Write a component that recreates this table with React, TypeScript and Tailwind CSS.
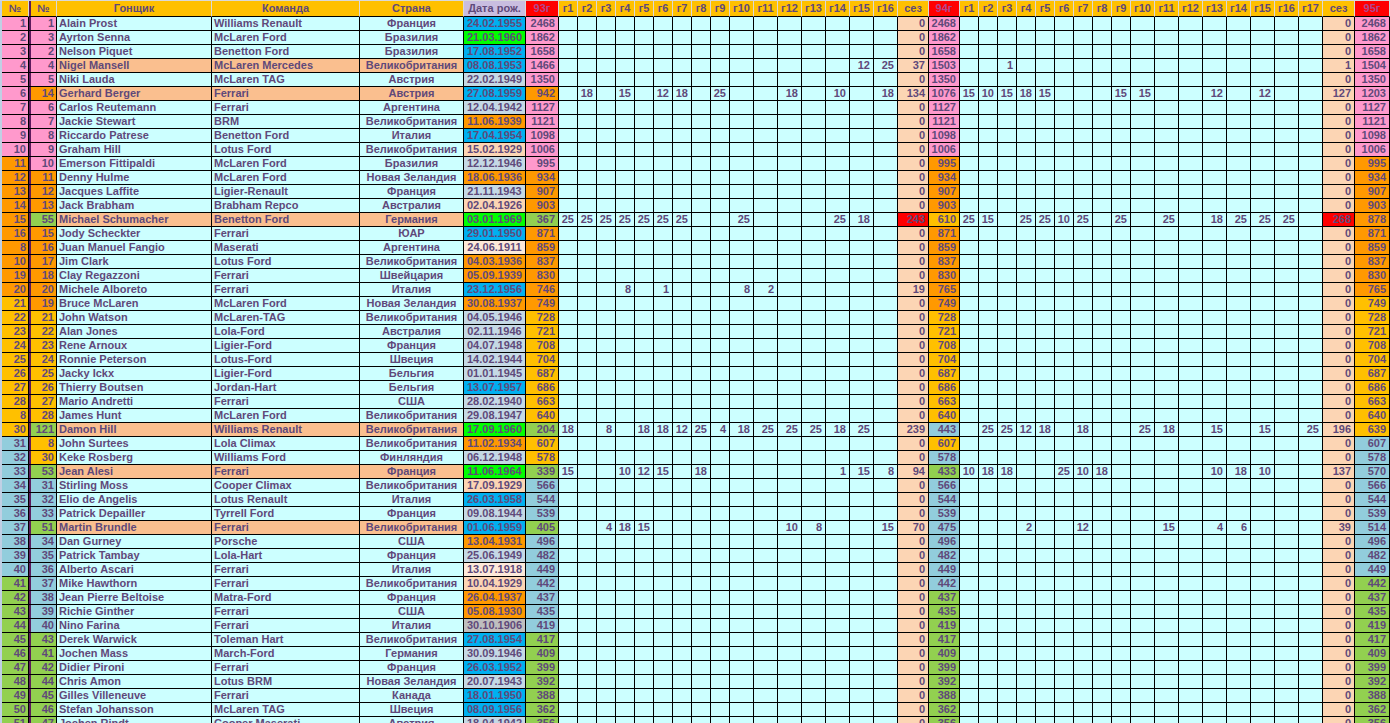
import React from 'react';

type Drv = [number, number, string, string, string, string, number, boolean?];

const DRIVERS: Drv[] = [
  [1, 1, 'Alain Prost', 'Williams Renault', 'Франция', '24.02.1955', 2468],
  [2, 3, 'Ayrton Senna', 'McLaren Ford', 'Бразилия', '21.03.1960', 1862],
  [3, 2, 'Nelson Piquet', 'Benetton Ford', 'Бразилия', '17.08.1952', 1658],
  [4, 4, 'Nigel Mansell', 'McLaren Mercedes', 'Великобритания', '08.08.1953', 1466, true],
  [5, 5, 'Niki Lauda', 'McLaren TAG', 'Австрия', '22.02.1949', 1350],
  [6, 14, 'Gerhard Berger', 'Ferrari', 'Австрия', '27.08.1959', 942, true],
  [7, 6, 'Carlos Reutemann', 'Ferrari', 'Аргентина', '12.04.1942', 1127],
  [8, 7, 'Jackie Stewart', 'BRM', 'Великобритания', '11.06.1939', 1121],
  [9, 8, 'Riccardo Patrese', 'Benetton Ford', 'Италия', '17.04.1954', 1098],
  [10, 9, 'Graham Hill', 'Lotus Ford', 'Великобритания', '15.02.1929', 1006],
  [11, 10, 'Emerson Fittipaldi', 'McLaren Ford', 'Бразилия', '12.12.1946', 995],
  [12, 11, 'Denny Hulme', 'McLaren Ford', 'Новая Зеландия', '18.06.1936', 934],
  [13, 12, 'Jacques Laffite', 'Ligier-Renault', 'Франция', '21.11.1943', 907],
  [14, 13, 'Jack Brabham', 'Brabham Repco', 'Австралия', '02.04.1926', 903],
  [15, 55, 'Michael Schumacher', 'Benetton Ford', 'Германия', '03.01.1969', 367, true],
  [16, 15, 'Jody Scheckter', 'Ferrari', 'ЮАР', '29.01.1950', 871],
  [8, 16, 'Juan Manuel Fangio', 'Maserati', 'Аргентина', '24.06.1911', 859],
  [10, 17, 'Jim Clark', 'Lotus Ford', 'Великобритания', '04.03.1936', 837],
  [19, 18, 'Clay Regazzoni', 'Ferrari', 'Швейцария', '05.09.1939', 830],
  [20, 20, 'Michele Alboreto', 'Ferrari', 'Италия', '23.12.1956', 746],
  [21, 19, 'Bruce McLaren', 'McLaren Ford', 'Новая Зеландия', '30.08.1937', 749],
  [22, 21, 'John Watson', 'McLaren-TAG', 'Великобритания', '04.05.1946', 728],
  [23, 22, 'Alan Jones', 'Lola-Ford', 'Австралия', '02.11.1946', 721],
  [24, 23, 'Rene Arnoux', 'Ligier-Ford', 'Франция', '04.07.1948', 708],
  [25, 24, 'Ronnie Peterson', 'Lotus-Ford', 'Швеция', '14.02.1944', 704],
  [26, 25, 'Jacky Ickx', 'Ligier-Ford', 'Бельгия', '01.01.1945', 687],
  [27, 26, 'Thierry Boutsen', 'Jordan-Hart', 'Бельгия', '13.07.1957', 686],
  [28, 27, 'Mario Andretti', 'Ferrari', 'США', '28.02.1940', 663],
  [8, 28, 'James Hunt', 'McLaren Ford', 'Великобритания', '29.08.1947', 640],
  [30, 121, 'Damon Hill', 'Williams Renault', 'Великобритания', '17.09.1960', 204, true],
  [31, 8, 'John Surtees', 'Lola Climax', 'Великобритания', '11.02.1934', 607],
  [32, 30, 'Keke Rosberg', 'Williams Ford', 'Финляндия', '06.12.1948', 578],
  [33, 53, 'Jean Alesi', 'Ferrari', 'Франция', '11.06.1964', 339, true],
  [34, 31, 'Stirling Moss', 'Cooper Climax', 'Великобритания', '17.09.1929', 566],
  [35, 32, 'Elio de Angelis', 'Lotus Renault', 'Италия', '26.03.1958', 544],
  [36, 33, 'Patrick Depailler', 'Tyrrell Ford', 'Франция', '09.08.1944', 539],
  [37, 51, 'Martin Brundle', 'Ferrari', 'Великобритания', '01.06.1959', 405, true],
  [38, 34, 'Dan Gurney', 'Porsche', 'США', '13.04.1931', 496],
  [39, 35, 'Patrick Tambay', 'Lola-Hart', 'Франция', '25.06.1949', 482],
  [40, 36, 'Alberto Ascari', 'Ferrari', 'Италия', '13.07.1918', 449],
  [41, 37, 'Mike Hawthorn', 'Ferrari', 'Великобритания', '10.04.1929', 442],
  [42, 38, 'Jean Pierre Beltoise', 'Matra-Ford', 'Франция', '26.04.1937', 437],
  [43, 39, 'Richie Ginther', 'Ferrari', 'США', '05.08.1930', 435],
  [44, 40, 'Nino Farina', 'Ferrari', 'Италия', '30.10.1906', 419],
  [45, 43, 'Derek Warwick', 'Toleman Hart', 'Великобритания', '27.08.1954', 417],
  [46, 41, 'Jochen Mass', 'March-Ford', 'Германия', '30.09.1946', 409],
  [47, 42, 'Didier Pironi', 'Ferrari', 'Франция', '26.03.1952', 399],
  [48, 44, 'Chris Amon', 'Lotus BRM', 'Новая Зеландия', '20.07.1943', 392],
  [49, 45, 'Gilles Villeneuve', 'Ferrari', 'Канада', '18.01.1950', 388],
  [50, 46, 'Stefan Johansson', 'McLaren TAG', 'Швеция', '08.09.1956', 362],
  [51, 47, 'Jochen Rindt', 'Cooper Maserati', 'Австрия', '18.04.1942', 356],
];

const R93: Record<number, Record<number, number>> = {
  4: { 15: 12, 16: 25 },
  6: { 2: 18, 4: 15, 6: 12, 7: 18, 9: 25, 12: 18, 14: 10, 16: 18 },
  15: { 1: 25, 2: 25, 3: 25, 4: 25, 5: 25, 6: 25, 7: 25, 10: 25, 14: 25, 15: 18 },
  20: { 4: 8, 6: 1, 10: 8, 11: 2 },
  30: { 1: 18, 3: 8, 5: 18, 6: 18, 7: 12, 8: 25, 9: 4, 10: 18, 11: 25, 12: 25, 13: 25, 14: 18, 15: 25 },
  33: { 1: 15, 4: 10, 5: 12, 6: 15, 8: 18, 14: 1, 15: 15, 16: 8 },
  37: { 3: 4, 4: 18, 5: 15, 12: 10, 13: 8, 16: 15 },
};

const R94: Record<number, Record<number, number>> = {
  4: { 3: 1 },
  6: { 1: 15, 2: 10, 3: 15, 4: 18, 5: 15, 9: 15, 10: 15, 13: 12, 15: 12 },
  15: { 1: 25, 2: 15, 4: 25, 5: 25, 6: 10, 7: 25, 9: 25, 11: 25, 13: 18, 14: 25, 15: 25, 16: 25 },
  30: { 2: 25, 3: 25, 4: 12, 5: 18, 7: 18, 10: 25, 11: 18, 13: 15, 15: 15, 17: 25 },
  33: { 1: 10, 2: 18, 3: 18, 6: 25, 7: 10, 8: 18, 13: 10, 14: 18, 15: 10 },
  37: { 4: 2, 7: 12, 11: 15, 13: 4, 14: 6 },
};

const RED_SEASON = new Set([15]);

const GROUP = ['bg-[#ff99cc]', 'bg-[#ff9900]', 'bg-[#ffc000]', 'bg-[#92cddc]', 'bg-[#92d050]'];

const COLS =
  'grid grid-cols-[2px_27px_2px_26px_155px_148px_104px_62px_33px_repeat(9,19px)_repeat(7,24px)_31px_31px_repeat(9,19px)_repeat(8,24px)_32px_35px]';

function dateBg(d: string): string {
  const y = parseInt(d.slice(6), 10);
  if (y >= 1960) return 'bg-[#00ff00]';
  if (y >= 1950) return 'bg-[#00b0f0]';
  if (y >= 1940) return 'bg-[#c5d9e5]';
  if (y >= 1930) return 'bg-[#ff9900]';
  if (y >= 1920) return 'bg-[#fcd5b4]';
  if (y >= 1910) return 'bg-[#fde9d9]';
  return 'bg-[#bfbfbf]';
}

function sum(m?: Record<number, number>) {
  if (!m) return 0;
  return Object.values(m).reduce((a, b) => a + b, 0);
}

const rows = DRIVERS.map((d, i) => {
  const idx = i + 1;
  const s93 = sum(R93[idx]);
  const v94 = d[6] + s93;
  const s94 = sum(R94[idx]);
  const v95 = v94 + s94;
  return { d, idx, s93, v94, s94, v95 };
});

function groupOf(values: number[], v: number, rowIdx: number) {
  if (rowIdx > 50) return GROUP[4];
  const sorted = [...values].sort((a, b) => b - a);
  const r = sorted.indexOf(v);
  return GROUP[Math.min(4, Math.floor(r / 10))];
}

const first50 = rows.slice(0, 50);
const vals93 = first50.map((r) => r.d[6]);
const vals94 = first50.map((r) => r.v94);
const vals95 = first50.map((r) => r.v95);

const cell = 'border-r border-b border-black flex items-center overflow-hidden whitespace-nowrap';
const hcell = 'border-r border-b border-r-[#d9d9d9] border-b-black flex items-center justify-center overflow-hidden whitespace-nowrap';

const R93_COLS = Array.from({ length: 16 }, (_, i) => i + 1);
const R94_COLS = Array.from({ length: 17 }, (_, i) => i + 1);

function Header() {
  return (
    <div className={`${COLS} h-[17px] border-t border-t-[#d9d9d9]`}>
      <div className="bg-[#c0d0e4]" />
      <div className={`${hcell} bg-[#ffc000]`}>№</div>
      <div className="bg-[#5c1a5c] border-b border-black" />
      <div className={`${hcell} bg-[#ffc000]`}>№</div>
      <div className={`${hcell} bg-[#ffc000]`}>Гонщик</div>
      <div className={`${hcell} bg-[#ffc000]`}>Команда</div>
      <div className={`${hcell} bg-[#ffc000]`}>Страна</div>
      <div className={`${hcell} bg-[#c9bde0]`}>Дата рож.</div>
      <div className={`${hcell} bg-[#ff0000] text-[#b0488e]`}>93г</div>
      {R93_COLS.map((n) => (
        <div key={`h93-${n}`} className={`${hcell} bg-[#ffc000]`}>
          г{n}
        </div>
      ))}
      <div className={`${hcell} bg-[#ffc000]`}>сез</div>
      <div className={`${hcell} bg-[#ff0000] text-[#b0488e]`}>94г</div>
      {R94_COLS.map((n) => (
        <div key={`h94-${n}`} className={`${hcell} bg-[#ffc000]`}>
          г{n}
        </div>
      ))}
      <div className={`${hcell} bg-[#ffc000]`}>сез</div>
      <div className={`${hcell} bg-[#ff0000] text-[#b0488e]`}>95г</div>
    </div>
  );
}

function Row({ r }: { r: (typeof rows)[number] }) {
  const [c0, c1, name, team, country, date, v93, hl] = r.d;
  const g0 = GROUP[Math.min(4, Math.floor((r.idx - 1) / 10))];
  const g93 = groupOf(vals93, v93, r.idx);
  const g94 = groupOf(vals94, r.v94, r.idx);
  const g95 = groupOf(vals95, r.v95, r.idx);
  const txtBg = hl ? 'bg-[#fabf8f]' : 'bg-[#ccffff]';
  const red = RED_SEASON.has(r.idx);
  const m93 = R93[r.idx] || {};
  const m94 = R94[r.idx] || {};
  return (
    <div className={`${COLS} h-[14px]`}>
      <div className="bg-[#c0d0e4]" />
      <div className={`${cell} ${g0} justify-end pr-[2px]`}>{c0}</div>
      <div className="bg-[#5c1a5c] border-b border-black" />
      <div className={`${cell} ${g93} justify-end pr-[2px]`}>{c1}</div>
      <div className={`${cell} ${txtBg} pl-[2px]`}>{name}</div>
      <div className={`${cell} ${txtBg} pl-[2px]`}>{team}</div>
      <div className={`${cell} ${txtBg} justify-center`}>{country}</div>
      <div className={`${cell} ${dateBg(date)} justify-center`}>{date}</div>
      <div className={`${cell} ${g93} justify-end pr-[3px]`}>{v93}</div>
      {R93_COLS.map((n) => (
        <div key={`a${n}`} className={`${cell} bg-[#ccffff] justify-end pr-[3px]`}>
          {m93[n] ?? ''}
        </div>
      ))}
      <div className={`${cell} ${red ? 'bg-[#ff0000]' : 'bg-[#fcd5b4]'} justify-end pr-[3px]`}>{r.s93}</div>
      <div className={`${cell} ${g94} justify-end pr-[3px]`}>{r.v94}</div>
      {R94_COLS.map((n) => (
        <div key={`b${n}`} className={`${cell} bg-[#ccffff] justify-end pr-[3px]`}>
          {m94[n] ?? ''}
        </div>
      ))}
      <div className={`${cell} ${red ? 'bg-[#ff0000]' : 'bg-[#fcd5b4]'} justify-end pr-[3px]`}>{r.s94}</div>
      <div className={`${cell} ${g95} justify-end pr-[3px]`}>{r.v95}</div>
    </div>
  );
}

export default function App() {
  return (
    <div className="w-[1390px] h-[723px] overflow-hidden bg-white font-['Liberation_Sans',Arial,sans-serif] text-[11px] leading-[13px] font-bold text-[#5f497a]">
      <Header />
      {rows.map((r) => (
        <Row key={r.idx} r={r} />
      ))}
    </div>
  );
}
